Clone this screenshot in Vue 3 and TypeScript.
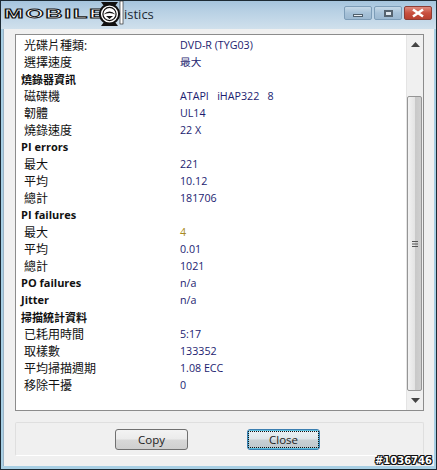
<script setup lang="ts">
interface Row { label: string; value?: string; head?: boolean; gold?: boolean; latin?: boolean }
const rows: Row[] = [
  { label: '光碟片種類:', value: 'DVD-R (TYG03)' },
  { label: '選擇速度', value: '最大' },
  { label: '燒錄器資訊', head: true },
  { label: '磁碟機', value: 'ATAPI   iHAP322   8' },
  { label: '韌體', value: 'UL14' },
  { label: '燒錄速度', value: '22 X' },
  { label: 'PI errors', head: true, latin: true },
  { label: '最大', value: '221' },
  { label: '平均', value: '10.12' },
  { label: '總計', value: '181706' },
  { label: 'PI failures', head: true, latin: true },
  { label: '最大', value: '4', gold: true },
  { label: '平均', value: '0.01' },
  { label: '總計', value: '1021' },
  { label: 'PO failures', value: 'n/a', head: true, latin: true },
  { label: 'Jitter', value: 'n/a', head: true, latin: true },
  { label: '掃描統計資料', head: true },
  { label: '已耗用時間', value: '5:17' },
  { label: '取樣數', value: '133352' },
  { label: '平均掃描週期', value: '1.08 ECC' },
  { label: '移除干擾', value: '0' },
]
</script>

<template>
  <div class="win">
    <header class="titlebar">
      <div class="logo">
        <span class="logo-text">MOBILE</span>
        <svg class="logo-mark" width="25" height="26" viewBox="0 0 25 26">
          <path d="M5 5 L2 1 H19 L16 5 Z M5 21 L2 25 H19 L16 21 Z" fill="#111" />
          <rect x="21" y="0" width="3" height="23" fill="#fff" stroke="#111" stroke-width="0.6" />
          <circle cx="10.5" cy="13" r="9.6" fill="#fff" stroke="#111" stroke-width="2" />
          <circle cx="10.5" cy="13" r="6.6" fill="none" stroke="#111" stroke-width="1.2" />
          <path d="M4.5 13.5 Q10.5 7.5 16.5 13.5 Q10.5 10.5 4.5 13.5 Z M7 15 H14 L10.5 18 Z" fill="#111" />
        </svg>
      </div>
      <span class="title">istics</span>
      <div class="controls">
        <span class="ctl"><i class="min"></i></span>
        <span class="ctl"><i class="max"></i></span>
        <span class="ctl close">
          <svg width="16" height="10" viewBox="0 0 16 10"><path d="M3 1.5 L13 8.5 M13 1.5 L3 8.5" stroke="#fff" stroke-width="2.6" fill="none" /></svg>
        </span>
      </div>
    </header>

    <div class="client">
      <section class="panel">
        <div class="list">
          <div v-for="(r, i) in rows" :key="i" class="row" :class="{ head: r.head, latin: r.latin }">
            <span class="label">{{ r.label }}</span>
            <span v-if="r.value" class="value" :class="{ gold: r.gold }">{{ r.value }}</span>
          </div>
        </div>
        <div class="scroll">
          <svg class="arrow" width="9" height="5" viewBox="0 0 9 5"><path d="M4.5 0 L9 5 H0 Z" fill="#444" /></svg>
          <div class="thumb">
            <svg width="8" height="8" viewBox="0 0 8 8"><path d="M1 1.5H7M1 4H7M1 6.5H7" stroke="#555" stroke-width="1" /></svg>
          </div>
          <svg class="arrow" width="9" height="5" viewBox="0 0 9 5"><path d="M0 0 H9 L4.5 5 Z" fill="#444" /></svg>
        </div>
      </section>

      <footer class="actions">
        <button class="btn">Copy</button>
        <button class="btn default"><span>Close</span></button>
      </footer>
    </div>

    <div class="mark">#1036746</div>
  </div>
</template>

<style>
html, body { margin: 0; padding: 0; }
</style>

<style scoped>
.win {
  position: relative;
  width: 437px;
  height: 470px;
  box-sizing: border-box;
  display: flex;
  flex-direction: column;
  overflow: hidden;
  border: 1px solid #1c2a34;
  background: #a8cfe4;
  font-family: "Open Sans", "Noto Sans CJK TC", sans-serif;
}
.titlebar {
  height: 28px;
  flex: none;
  display: flex;
  align-items: flex-start;
  background: linear-gradient(180deg, #a5c4dd 0%, #b7d0e4 35%, #d0e0ec 100%);
}
.logo {
  position: relative;
  width: 123px;
  height: 26px;
  flex: none;
}
.title {
  flex: 1;
  margin-top: 4px;
  font-size: 13px;
  line-height: 18px;
  color: #1e2a34;
  font-family: "Open Sans", sans-serif;
}
.controls {
  display: flex;
  gap: 2px;
  margin: 5px 4px 0 0;
}
.ctl {
  width: 26px;
  height: 12px;
  display: flex;
  align-items: center;
  justify-content: center;
  border: 1px solid #7d9db8;
  border-radius: 2px;
  background: linear-gradient(180deg, #c6d9e8 0%, #a7c2d8 50%, #9cb9d1 100%);
}
.ctl .min { display: block; width: 10px; height: 3px; margin-top: 4px; background: #e8eef3; border: 1px solid #4f5f6c; box-sizing: border-box; }
.ctl .max { display: block; width: 9px; height: 7px; border: 2px solid #55636f; box-sizing: border-box; background: #dfe7ee; }
.close { border-color: #8e3c34; background: linear-gradient(180deg, #df8b7e 0%, #c9503f 50%, #b84030 100%); }

.client {
  flex: 1;
  min-height: 0;
  margin: 0 2px 3px 2px;
  padding: 5px 10px 10px 11px;
  background: #f0f0f0;
  display: flex;
  flex-direction: column;
  border-left: 1px solid #9db4c6;
}
.panel {
  height: 377px;
  flex: none;
  box-sizing: border-box;
  display: flex;
  background: #fff;
  border: 1px solid #8c8c8c;
}
.list {
  flex: 1;
  padding: 2px 0 0 5px;
}
.row {
  height: 17px;
  display: flex;
  align-items: center;
  font-size: 12px;
  line-height: 17px;
  color: #111;
}
.label { width: 159px; padding-left: 3px; flex: none; box-sizing: border-box; }
.value { font-size: 10.7px; color: #1c1c70; white-space: pre; }
.value.gold { color: #a88a20; }
.head .label { padding-left: 0; font-weight: 700; font-family: "Open Sans", "Noto Sans CJK TC", sans-serif; font-size: 11px; color: #111; }
.latin .label { padding-bottom: 2px; }

.scroll {
  width: 17px;
  flex: none;
  display: flex;
  flex-direction: column;
  align-items: center;
  background: #f0f0f0;
  border-left: 1px solid #e4e4e4;
  box-sizing: border-box;
}
.arrow { flex: none; margin: 7px 0; }
.thumb {
  flex: 1;
  align-self: stretch;
  margin: 42px 1px 0 0;
  display: flex;
  align-items: center;
  justify-content: center;
  border: 1px solid #959595;
  border-radius: 2px;
  background: linear-gradient(90deg, #f2f2f2 0%, #e4e4e4 50%, #c8c8c8 52%, #cfcfcf 100%);
}

.actions {
  margin-top: 11px;
  height: 34px;
  flex: none;
  box-sizing: border-box;
  display: flex;
  align-items: center;
  gap: 59px;
  padding: 0 0 0 99px;
  border: 1px solid #dfdfdf;
  border-bottom-color: #fff;
  border-radius: 2px;
}
.btn {
  width: 73px;
  height: 21px;
  box-sizing: border-box;
  padding: 0;
  border: 1px solid #707070;
  border-radius: 3px;
  background: linear-gradient(180deg, #f3f3f3 0%, #ebebeb 48%, #d8d8d8 52%, #cfcfcf 100%);
  font-family: "Open Sans", sans-serif;
  font-size: 11.5px;
  color: #222;
}
.default {
  border: 1px solid #3c7fb1;
  box-shadow: inset 0 0 0 1px #5cc0e0;
  background: linear-gradient(180deg, #eaf2f6 0%, #dfe6ea 48%, #c8d0d4 52%, #bcc6cc 100%);
}
.default span {
  display: flex;
  align-items: center;
  justify-content: center;
  margin: 1px;
  height: 15px;
  outline: 1px dotted #111;
}
.logo-text {
  position: absolute;
  left: 3px;
  top: 7px;
  font-family: "Liberation Sans", sans-serif;
  font-size: 12px;
  font-weight: 700;
  letter-spacing: 1px;
  line-height: 13px;
  color: #fff;
  -webkit-text-stroke: 0.8px #111;
  transform: scaleX(1.95);
  transform-origin: left center;
}
.logo-mark {
  position: absolute;
  left: 98px;
  top: 0;
}
.mark {
  position: absolute;
  right: 4px;
  bottom: 1px;
  font-family: "DejaVu Sans", sans-serif;
  font-size: 10px;
  font-weight: 700;
  line-height: 14px;
  color: #fff;
  text-shadow: 1px 0 #111, -1px 0 #111, 0 1px #111, 0 -1px #111, 1px 1px #111, -1px -1px #111, 1px -1px #111, -1px 1px #111;
}
</style>
